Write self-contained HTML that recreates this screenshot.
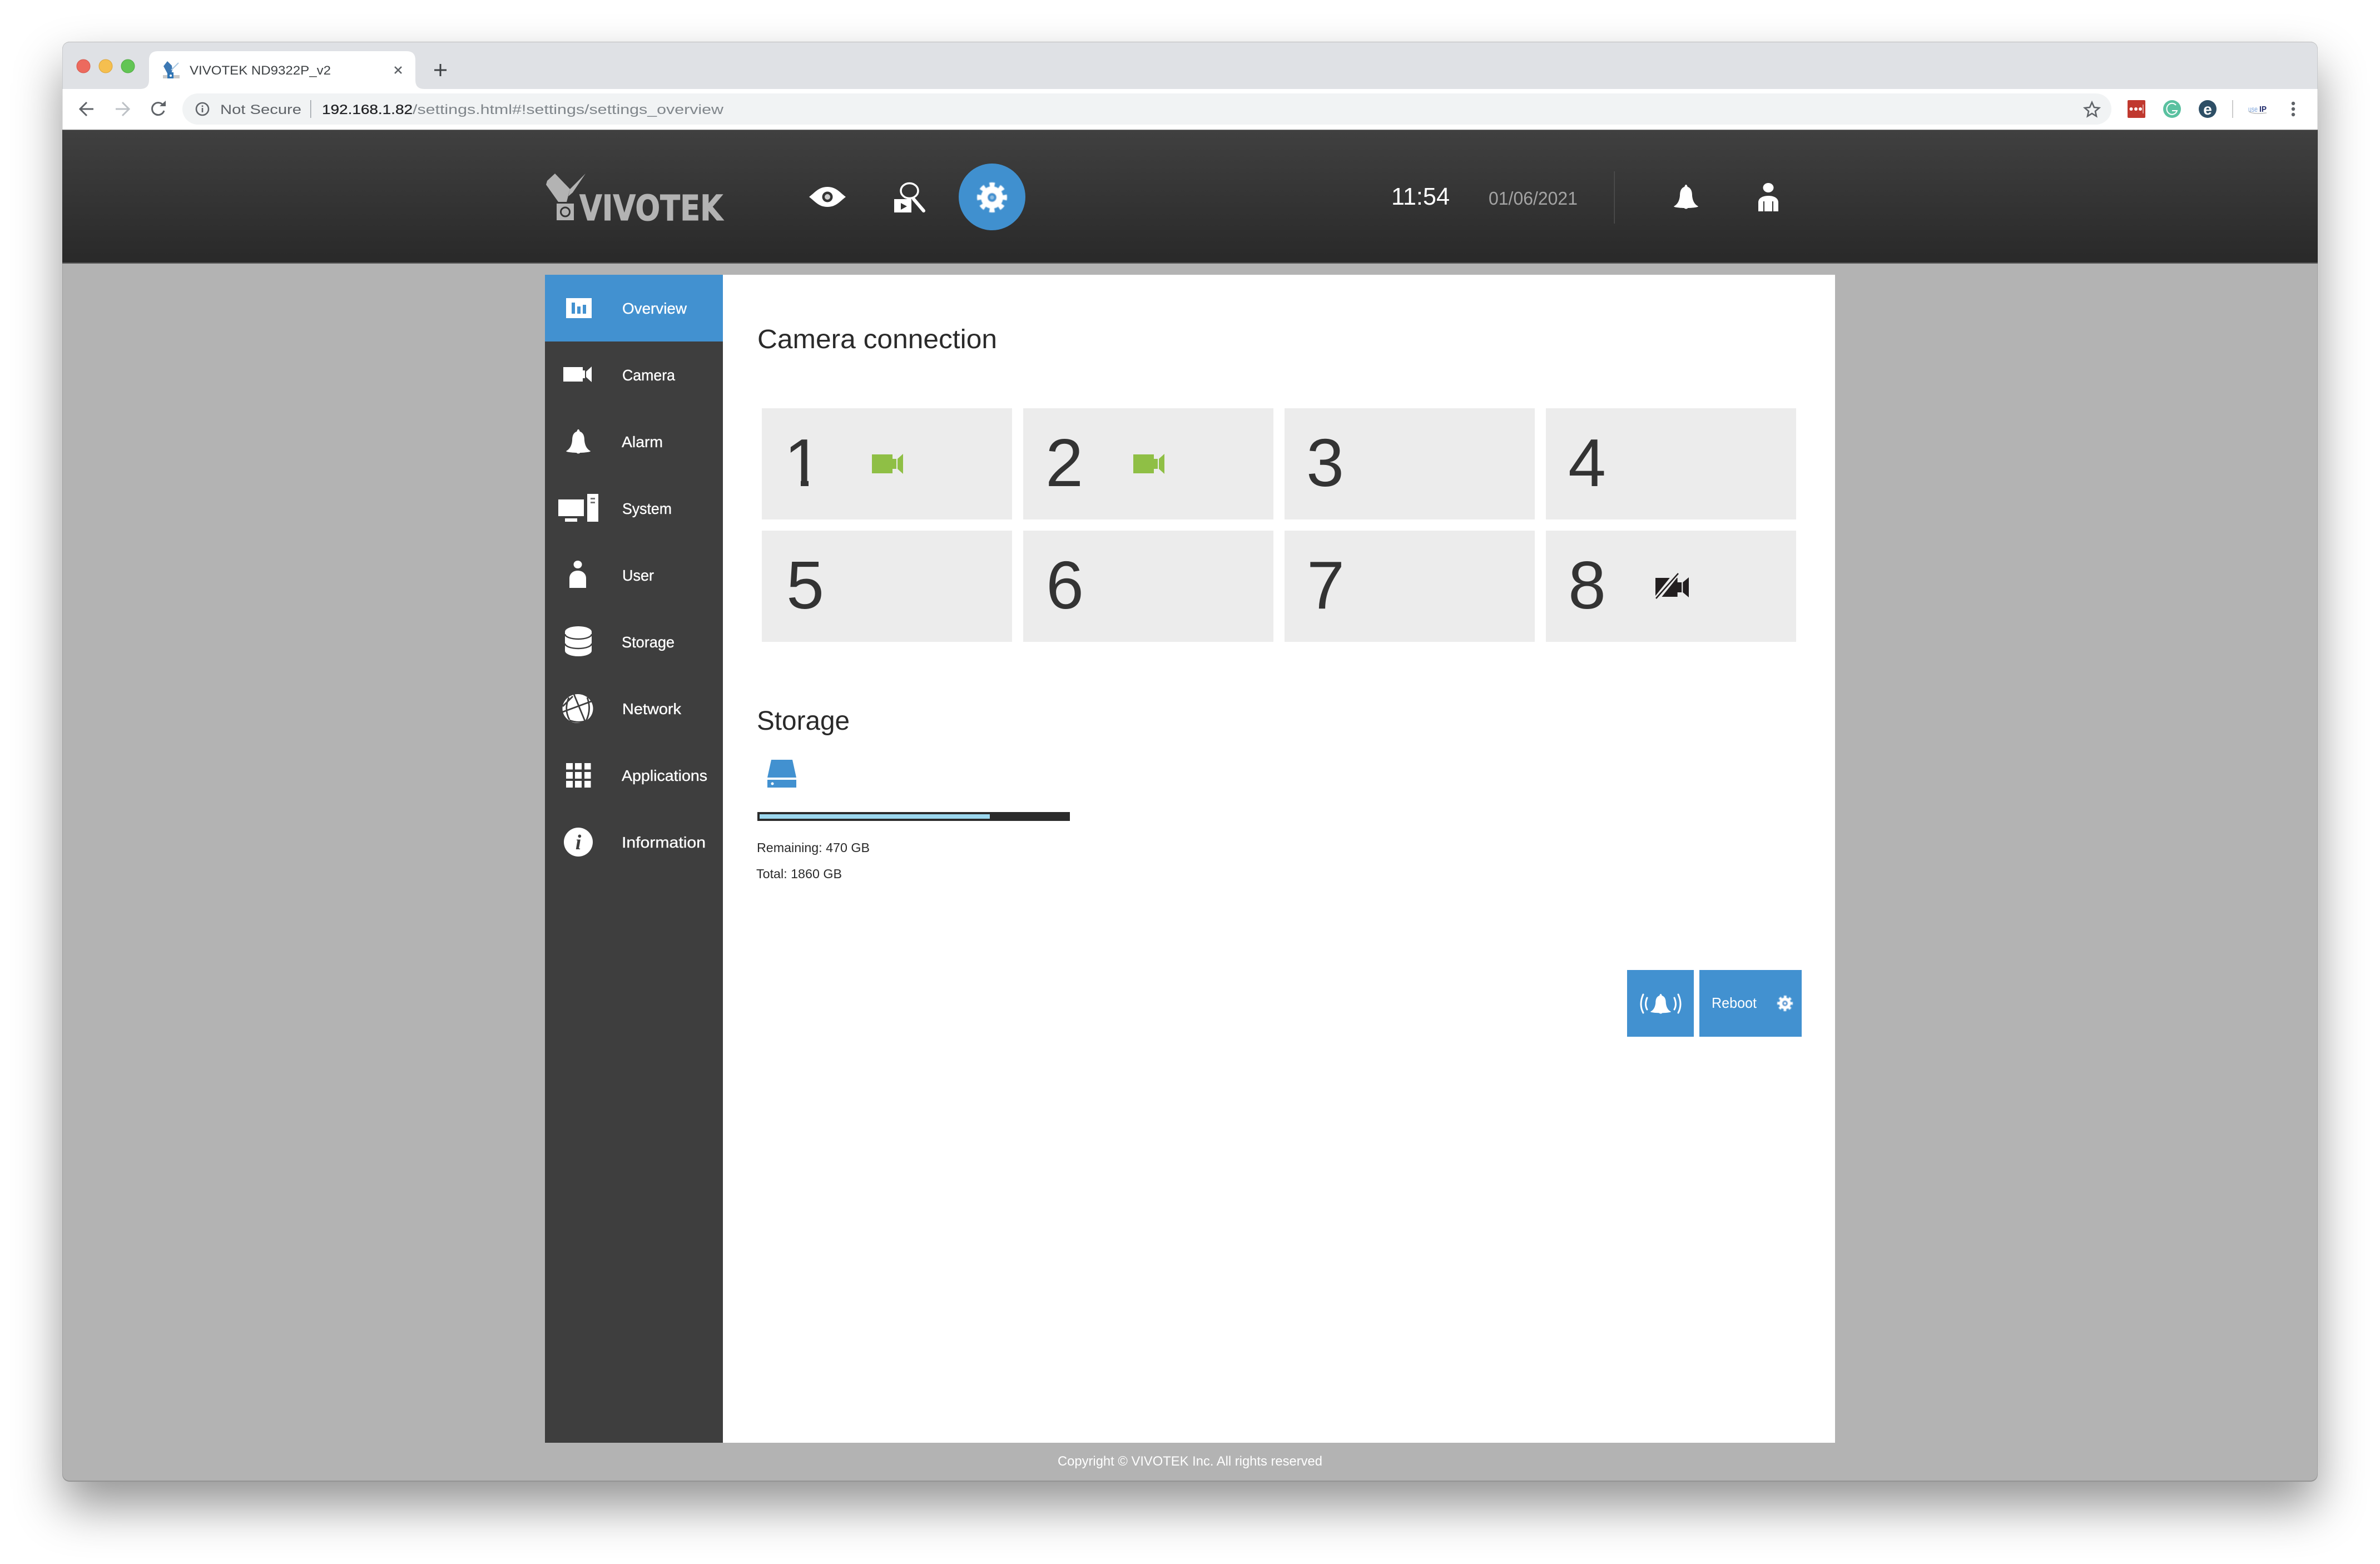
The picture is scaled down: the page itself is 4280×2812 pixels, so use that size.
<!DOCTYPE html>
<html lang="en">
<head>
<meta charset="utf-8">
<title>VIVOTEK ND9322P_v2</title>
<style>
html,body{margin:0;padding:0;background:#fff}
body{position:relative;width:4280px;height:2812px;overflow:hidden;font-family:"Liberation Sans",sans-serif}
#win{position:absolute;left:112px;top:75px;width:4056px;height:2589px;border-radius:13px;background:#b3b3b3;overflow:hidden;box-shadow:0 44px 85px rgba(0,0,0,.42)}
#win div{position:absolute}
#strip{left:0;top:0;width:4056px;height:85px;background:#dfe1e5}
#tool{left:0;top:85px;width:4056px;height:73px;background:#fff}
#omni{left:216px;top:93px;width:3469px;height:56px;border-radius:28px;background:#f1f3f4}
#head{left:0;top:158px;width:4056px;background:linear-gradient(#404040,#292929);border-top:1px solid #777;border-bottom:2px solid #5a5a5a;box-sizing:border-box;height:241px}
#side{left:868px;top:419px;width:320px;height:2100px;background:#3e3e3e}
#act{left:868px;top:419px;width:320px;height:120px;background:#4291d0}
#panel{left:1188px;top:419px;width:2000px;height:2100px;background:#fff}
.t{width:450px;height:200px;background:#ececec}
.b{background:#4291d0;top:1669px;height:120px}
#bar{left:1250px;top:1385px;width:562px;height:16px;background:#2b2b2b}
#fill{left:1254px;top:1389px;width:414px;height:8px;background:#9dd8ef}
#edge{left:0;top:0;width:4056px;height:2589px;border-radius:13px;box-shadow:inset 0 1px 0 #bdbdbd,inset 0 -2px 0 #939393,inset 1px 0 0 rgba(0,0,0,.1),inset -1px 0 0 rgba(0,0,0,.1)}
svg#o{position:absolute;left:0;top:0}
text{font-family:"Liberation Sans",sans-serif}
.n{font-size:28px;fill:#fff;stroke:#fff;stroke-width:.35}
.d{font-size:122px;fill:#333;text-anchor:middle}
</style>
</head>
<body>
<div id="win">
  <div id="strip"></div>
  <div id="tool"></div>
  <div id="omni"></div>
  <div id="head"></div>
  <div id="side"></div>
  <div id="act"></div>
  <div id="panel"></div>
  <div class="t" style="left:1258px;top:659px"></div>
  <div class="t" style="left:1728px;top:659px"></div>
  <div class="t" style="left:2198px;top:659px"></div>
  <div class="t" style="left:2668px;top:659px"></div>
  <div class="t" style="left:1258px;top:879px"></div>
  <div class="t" style="left:1728px;top:879px"></div>
  <div class="t" style="left:2198px;top:879px"></div>
  <div class="t" style="left:2668px;top:879px"></div>
  <div id="bar"></div>
  <div id="fill"></div>
  <div class="b" style="left:2814px;width:120px"></div>
  <div class="b" style="left:2944px;width:184px"></div>
  <div id="edge"></div>
</div>

<svg id="o" width="4280" height="2812" viewBox="0 0 4280 2812" xmlns="http://www.w3.org/2000/svg">
<defs>
  <symbol id="bell" viewBox="0 0 44 44" preserveAspectRatio="none">
    <path fill="#fff" d="M22 0C24 0 24 3 25 4C31 6 33 12 33 20C34 30 38 36 44 39C44 41 30 42 25 42C25 44 19 44 19 42C14 42 0 41 0 39C6 36 10 30 11 20C11 12 13 6 19 4C20 3 20 0 22 0Z"/>
  </symbol>
  <symbol id="cam" viewBox="0 0 56 36" preserveAspectRatio="none">
    <path d="M0 1H37V9H44V27H37V35H0ZM46 9L56 0V36L46 27Z"/>
  </symbol>
  <filter id="s" x="-20%" y="-20%" width="140%" height="140%"><feGaussianBlur stdDeviation=".8"/></filter>
  <clipPath id="one"><rect x="1400" y="770" width="80" height="94.5"/><rect x="1440" y="864" width="14" height="12"/></clipPath>
</defs>

<!-- traffic lights -->
<circle cx="150" cy="119" r="12" fill="#ec6a5e" stroke="#d5574c"/>
<circle cx="190" cy="119" r="12" fill="#f5bf4f" stroke="#dca63b"/>
<circle cx="230" cy="119" r="12" fill="#62c554" stroke="#50ac43"/>

<!-- tab -->
<path fill="#fff" d="M252 160Q268 160 268 144V108Q268 92 284 92H731Q747 92 747 108V144Q747 160 763 160Z"/>
<path fill="#c9c9c9" d="M293 135H323V141H293Z"/>
<path fill="#3c78b4" d="M301 110L309 118L310 126L308 132H301L294 119Z"/>
<path fill="none" stroke="#a9c8e2" stroke-width="2" d="M308 126L321 113"/>
<rect x="301" y="130" width="11" height="11" fill="#2f75b5"/><circle cx="307" cy="136" r="2" fill="#fff"/>
<text x="341" y="134" font-size="22" fill="#3c4043" textLength="254" lengthAdjust="spacingAndGlyphs">VIVOTEK ND9322P_v2</text>
<path d="M710 120L722 132M722 120L710 132" stroke="#5f6368" stroke-width="2.6" fill="none"/>
<path d="M781 126H803M792 115V137" stroke="#3c4043" stroke-width="3" fill="none"/>

<!-- toolbar -->
<path d="M168 196H146M156 184L144 196L156 208" stroke="#5f6368" stroke-width="3" fill="none"/>
<path d="M208 196H230M220 184L232 196L220 208" stroke="#bdc1c6" stroke-width="3" fill="none"/>
<path d="M294 190A11 11 0 1 0 295 199" stroke="#5f6368" stroke-width="3" fill="none"/><path d="M287 191H298V181Z" fill="#5f6368"/>
<circle cx="364" cy="196" r="11" stroke="#5f6368" stroke-width="2.6" fill="none"/><rect x="362.7" y="194" width="2.6" height="8" fill="#5f6368"/><rect x="362.7" y="189.5" width="2.6" height="2.6" fill="#5f6368"/>
<text x="396" y="205" font-size="24" fill="#5f6368" textLength="146" lengthAdjust="spacingAndGlyphs">Not Secure</text>
<rect x="558" y="180" width="1.5" height="32" fill="#9aa0a6"/>
<text x="579" y="205" font-size="24" fill="#202124" stroke="#202124" stroke-width=".3" textLength="163" lengthAdjust="spacingAndGlyphs">192.168.1.82</text>
<text x="742" y="205" font-size="24" fill="#80868b" textLength="559" lengthAdjust="spacingAndGlyphs">/settings.html#!settings/settings_overview</text>
<path d="M3762 184L3766 193L3775 194L3768 200L3770 209L3762 204L3754 209L3756 200L3749 194L3758 193Z" fill="none" stroke="#5f6368" stroke-width="2.6"/>
<rect x="3826" y="180" width="32" height="32" rx="2" fill="#c0392f"/>
<circle cx="3832.5" cy="196" r="3" fill="#fff"/><circle cx="3841" cy="196" r="3" fill="#fff"/><circle cx="3849" cy="196" r="3" fill="#fff"/><rect x="3853.5" y="188" width="1" height="16" fill="#fff"/>
<circle cx="3906" cy="196" r="16" fill="#5ac1a0"/>
<path d="M3913 189A9.5 10 0 1 0 3915 199H3906" fill="none" stroke="#fff" stroke-width="2"/>
<circle cx="3970" cy="196" r="16" fill="#2e4f66"/>
<text x="3970" y="206" font-size="28" font-weight="bold" fill="#fff" text-anchor="middle">e</text>
<rect x="4014" y="180" width="2" height="32" fill="#ccc"/>
<text x="4043" y="201" font-size="14" fill="#7fa6dc" textLength="17" lengthAdjust="spacingAndGlyphs">use</text>
<text x="4063" y="201" font-size="15" font-weight="bold" fill="#1f2a6b" textLength="13" lengthAdjust="spacingAndGlyphs">IP</text>
<path d="M4044 200Q4050 206 4076 203" stroke="#bbb" stroke-width="1.5" fill="none"/>
<circle cx="4124" cy="186" r="3.2" fill="#5f6368"/><circle cx="4124" cy="196" r="3.2" fill="#5f6368"/><circle cx="4124" cy="206" r="3.2" fill="#5f6368"/>

<!-- logo -->
<g fill="#b3b3b3">
  <path d="M998 312L1025 340L1019 363H1004L982 332L984 325Z"/>
  <path d="M1025 340L1053 312L1030 346L1022 353Z"/>
  <rect x="1001" y="366" width="31" height="30"/>
</g>
<circle cx="1016.5" cy="381" r="8" fill="none" stroke="#333" stroke-width="3"/>
<text x="1042" y="396" font-size="63" font-weight="bold" fill="#b3b3b3" stroke="#b3b3b3" stroke-width="1" textLength="258" lengthAdjust="spacingAndGlyphs" style="font-family:'DejaVu Sans',sans-serif">VIVOTEK</text>

<!-- header icons -->
<path fill="#fff" d="M1455 354C1466 346 1472 336 1488 336C1504 336 1510 346 1521 354C1510 362 1504 372 1488 372C1472 372 1466 362 1455 354Z"/>
<circle cx="1488" cy="354" r="9.5" fill="#333"/><circle cx="1488" cy="354" r="5" fill="#ccc"/>
<ellipse cx="1635.5" cy="343" rx="15.5" ry="13.5" fill="none" stroke="#fff" stroke-width="3.5"/>
<path d="M1643 358L1661 379" stroke="#fff" stroke-width="6" stroke-linecap="round"/>
<rect x="1608" y="358" width="31" height="24" fill="#fff"/><path d="M1620 365L1631 371L1620 377Z" fill="#333"/>
<circle cx="1784" cy="354" r="60" fill="#4090cf"/>
<g transform="translate(1784 355) rotate(-11.25)" filter="url(#s)">
  <circle r="20" fill="#fff"/><circle r="23" fill="none" stroke="#fff" stroke-width="8" stroke-dasharray="9.03 9.03"/>
  <circle r="8" fill="#4090cf"/><circle r="3.5" fill="#8fbde2"/>
</g>
<text x="2502" y="368" font-size="44" fill="#fff" textLength="105" lengthAdjust="spacingAndGlyphs">11:54</text>
<text x="2677" y="368" font-size="33" fill="#a3a3a3" textLength="160" lengthAdjust="spacingAndGlyphs">01/06/2021</text>
<rect x="2902.5" y="308" width="1.5" height="94" fill="#4f4f4f"/>
<use href="#bell" x="3010" y="332" width="44" height="44"/>
<ellipse cx="3180" cy="337.5" rx="9.5" ry="8.5" fill="#fff"/>
<path fill="#fff" d="M3162 380V364C3162 356 3170 352 3180 352C3190 352 3198 356 3198 364V380H3189V362H3187V380H3173V362H3171V380Z"/>

<!-- sidebar icons -->
<rect x="1018" y="536" width="46" height="36" fill="#fff"/>
<rect x="1028" y="544" width="6" height="20" fill="#4291d0"/><rect x="1038" y="551" width="6" height="13" fill="#4291d0"/><rect x="1048" y="548" width="6" height="16" fill="#4291d0"/>
<text class="n" x="1119" y="564" textLength="116" lengthAdjust="spacingAndGlyphs">Overview</text>

<path fill="#fff" d="M1013 660H1048V666H1052V680H1048V686H1013ZM1054 668L1064 659V687L1054 678Z"/>
<text class="n" x="1119" y="684" textLength="95" lengthAdjust="spacingAndGlyphs">Camera</text>

<use href="#bell" x="1018" y="772" width="44" height="44"/>
<text class="n" x="1118" y="804" textLength="74" lengthAdjust="spacingAndGlyphs">Alarm</text>

<rect x="1004" y="898" width="46" height="30" fill="#fff"/><rect x="1016" y="932" width="22" height="6" fill="#fff"/>
<rect x="1056" y="888" width="20" height="50" fill="#fff"/><rect x="1062" y="895" width="8" height="3" fill="#777"/><rect x="1062" y="902" width="8" height="3" fill="#777"/>
<text class="n" x="1119" y="924" textLength="89" lengthAdjust="spacingAndGlyphs">System</text>

<ellipse cx="1039" cy="1015" rx="7.5" ry="7" fill="#fff"/>
<path fill="#fff" d="M1024 1057V1040C1024 1031 1031 1026 1039 1026C1047 1026 1054 1031 1054 1040V1057Z"/>
<text class="n" x="1119" y="1044" textLength="57" lengthAdjust="spacingAndGlyphs">User</text>

<path fill="#fff" d="M1016 1136A24 10 0 0 1 1064 1136V1170A24 10 0 0 1 1016 1170Z"/>
<path d="M1016 1140A24 9 0 0 0 1064 1140M1016 1157A24 9 0 0 0 1064 1157" fill="none" stroke="#3e3e3e" stroke-width="2.5"/>
<text class="n" x="1118" y="1164" textLength="95" lengthAdjust="spacingAndGlyphs">Storage</text>

<ellipse cx="1039" cy="1274" rx="27.5" ry="26" fill="#fff"/>
<path d="M1032 1248L1053 1299M1012 1280L1066 1260M1023 1254Q1014 1275 1024 1294M1056 1254Q1064 1276 1054 1296M1024 1295Q1040 1301 1054 1296M1012 1270Q1020 1262 1030 1252" fill="none" stroke="#3e3e3e" stroke-width="2.8"/>
<text class="n" x="1119" y="1284" textLength="106" lengthAdjust="spacingAndGlyphs">Network</text>

<g fill="#fff">
  <rect x="1018" y="1372" width="12" height="11.5"/><rect x="1034" y="1372" width="12" height="11.5"/><rect x="1051" y="1372" width="11.5" height="11.5"/>
  <rect x="1018" y="1388" width="12" height="12"/><rect x="1034" y="1388" width="12" height="12"/><rect x="1051" y="1388" width="11.5" height="12"/>
  <rect x="1018" y="1404" width="12" height="12"/><rect x="1034" y="1404" width="12" height="12"/><rect x="1051" y="1404" width="11.5" height="12"/>
</g>
<text class="n" x="1118" y="1404" textLength="154" lengthAdjust="spacingAndGlyphs">Applications</text>

<circle cx="1040" cy="1514" r="26" fill="#fff"/>
<text x="1040" y="1527" font-size="38" font-weight="bold" font-style="italic" fill="#3e3e3e" text-anchor="middle" style="font-family:'Liberation Serif',serif">i</text>
<text class="n" x="1118" y="1524" textLength="151" lengthAdjust="spacingAndGlyphs">Information</text>

<!-- camera connection -->
<text x="1362" y="626" font-size="48" fill="#2a2a2a" textLength="431" lengthAdjust="spacingAndGlyphs">Camera connection</text>
<g clip-path="url(#one)"><text class="d" x="1444" y="874">1</text></g>
<text class="d" x="1914" y="874">2</text>
<text class="d" x="2383" y="874">3</text>
<text class="d" x="2854" y="874">4</text>
<text class="d" x="1448" y="1094">5</text>
<text class="d" x="1915" y="1094">6</text>
<text class="d" x="2384" y="1094">7</text>
<text class="d" x="2854" y="1094">8</text>
<use href="#cam" x="1568" y="816" width="56" height="36" fill="#8fbf45"/>
<use href="#cam" x="2038" y="816" width="56" height="36" fill="#8fbf45"/>
<use href="#cam" x="2977" y="1038" width="60" height="36" fill="#231f20"/>
<path d="M2978 1078L3018 1028" stroke="#ececec" stroke-width="10"/>
<path d="M2978 1076L3018 1031" stroke="#231f20" stroke-width="2.5"/>

<!-- storage -->
<text x="1361" y="1312" font-size="48" fill="#2a2a2a" textLength="167" lengthAdjust="spacingAndGlyphs">Storage</text>
<path fill="#4291d0" d="M1387 1366H1425L1432 1398H1380ZM1380 1402H1432V1416H1380Z"/>
<circle cx="1389" cy="1409" r="2.5" fill="#fff"/>
<text x="1361" y="1532" font-size="23" fill="#2a2a2a" textLength="203" lengthAdjust="spacingAndGlyphs">Remaining: 470 GB</text>
<text x="1360" y="1579" font-size="23" fill="#2a2a2a" textLength="154" lengthAdjust="spacingAndGlyphs">Total: 1860 GB</text>

<!-- buttons -->
<use href="#bell" x="2968" y="1787" width="37" height="36"/>
<path d="M2955 1788Q2947 1806 2955 1821M2962 1794Q2957 1806 2962 1815M3011 1794Q3016 1806 3011 1815M3018 1788Q3026 1806 3018 1821" fill="none" stroke="#fff" stroke-width="3" stroke-linecap="round"/>
<text x="3078" y="1812" font-size="26" fill="#fff" textLength="81" lengthAdjust="spacingAndGlyphs">Reboot</text>
<g transform="translate(3210 1804) rotate(-11.25)" filter="url(#s)">
  <circle r="10.5" fill="#fff"/><circle r="12" fill="none" stroke="#fff" stroke-width="4" stroke-dasharray="4.71 4.71"/>
  <circle r="5" fill="#4291d0"/><circle r="2" fill="#fff"/>
</g>

<!-- footer -->
<text x="1902" y="2635" font-size="24" fill="#fff" textLength="476" lengthAdjust="spacingAndGlyphs">Copyright © VIVOTEK Inc. All rights reserved</text>
</svg>
</body>
</html>
